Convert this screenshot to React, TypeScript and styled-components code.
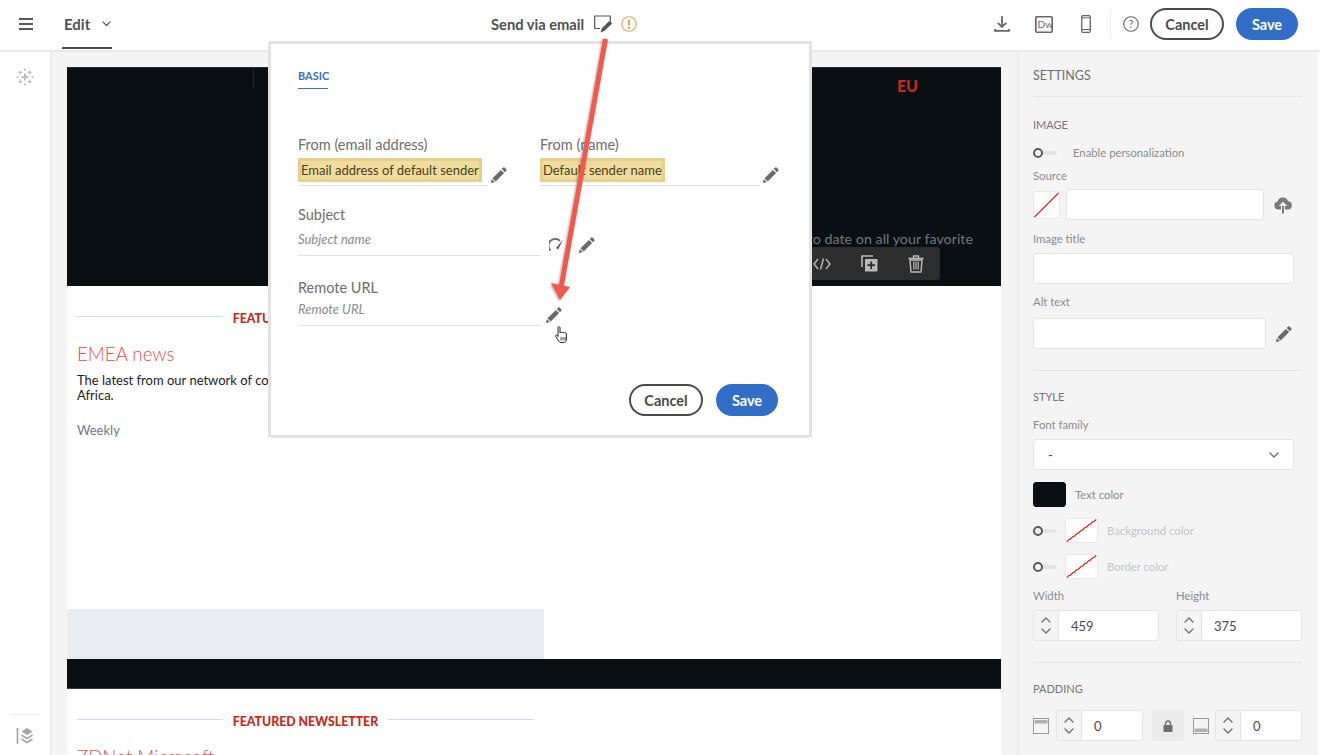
import React from 'react';
import styled, { createGlobalStyle } from 'styled-components';

const GlobalStyle = createGlobalStyle`
  html, body {
    margin: 0;
    padding: 0;
    background: #fff;
    overflow: hidden;
  }
  * {
    box-sizing: border-box;
  }
`;

const ui = `Lato, "Open Sans", sans-serif`;
const mail = `Lato, "Noto Sans", sans-serif`;

const Page = styled.div`
  position: relative;
  width: 1320px;
  height: 755px;
  overflow: hidden;
  font-family: ${ui};
  color: #4b4b4b;
  display: flex;
  flex-direction: column;
`;

const TopBar = styled.header`
  flex: 0 0 52px;
  height: 52px;
  background: #fff;
  border-bottom: 2px solid #e9e9e9;
  display: flex;
  align-items: center;
  padding: 0 22px 2px 19px;
`;

const LeftGroup = styled.div`
  width: 472px;
  height: 100%;
  display: flex;
  align-items: center;
`;

const EditTab = styled.div`
  position: relative;
  margin-left: 29px;
  width: 50px;
  height: 50px;
  display: flex;
  align-items: center;
  gap: 12px;
  padding-left: 2px;
  font-size: 15px;
  font-weight: 700;
  color: #505050;
  white-space: nowrap;

  &::after {
    content: '';
    position: absolute;
    left: 0;
    right: 0;
    bottom: 0;
    height: 2px;
    background: #4b4b4b;
  }
`;

const CenterGroup = styled.div`
  display: flex;
  align-items: center;
  font-size: 14.7px;
  font-weight: 700;
  color: #505050;
`;

const RightGroup = styled.div`
  margin-left: auto;
  display: flex;
  align-items: center;
`;

const Divider = styled.span`
  width: 1px;
  height: 28px;
  background: #ececec;
  margin: 0 12px 0 19px;
`;

const Pill = styled.button<{ $primary?: boolean }>`
  height: 32px;
  padding: 0;
  width: ${(p) => (p.$primary ? 62 : 74)}px;
  border-radius: 17px;
  border: 2px solid ${(p) => (p.$primary ? '#326ec8' : '#4b4b4b')};
  background: ${(p) => (p.$primary ? '#326ec8' : '#fff')};
  color: ${(p) => (p.$primary ? '#fff' : '#4b4b4b')};
  font-family: ${ui};
  font-size: 14.5px;
  font-weight: 700;
`;

const Body = styled.div`
  flex: 1;
  display: flex;
  min-height: 0;
`;

const Rail = styled.aside`
  flex: 0 0 52px;
  background: #fff;
  border-right: 2px solid #ececec;
  display: flex;
  flex-direction: column;
  justify-content: space-between;
  align-items: center;
  padding: 16px 0 10px;
`;

const RailFoot = styled.div`
  width: 30px;
  border-top: 1px solid #ececec;
  padding-top: 12px;
  display: flex;
  justify-content: center;
`;

const Canvas = styled.main`
  flex: 0 0 965px;
  background: #f4f4f4;
  padding: 15px 16px 0 15px;
  overflow: hidden;
`;

const Hero = styled.section`
  position: relative;
  height: 219px;
  background: #0a0f13;
  border-top: 1px solid #262b30;
  display: flex;
  flex-direction: column;
  align-items: flex-end;
  font-family: ${mail};

  &::before {
    content: '';
    position: absolute;
    left: 186px;
    top: 0;
    width: 1px;
    height: 20px;
    background: #1c2730;
  }
`;

const HeroTag = styled.div`
  margin: 8px 83px 0 0;
  color: #c9281c;
  font-size: 16px;
  font-weight: 900;
`;

const HeroText = styled.div`
  margin: 135px 28px 0 0;
  color: #70777e;
  font-size: 14.3px;
  white-space: nowrap;
`;

const HeroTools = styled.div`
  position: absolute;
  right: 61px;
  bottom: 6px;
  width: 260px;
  height: 33px;
  background: #2d2d2d;
  border-radius: 3px;
  display: flex;
  justify-content: flex-end;
  align-items: center;
  gap: 30px;
  padding-right: 16px;
  color: #b9b9b9;
`;

const Story = styled.section`
  height: 373px;
  background: #fff;
  display: flex;
  flex-direction: column;
  font-family: ${mail};
`;

const StoryCol = styled.div`
  width: 477px;
  flex: 1;
  padding: 25px 10px 0;
`;

const Ruled = styled.div`
  display: flex;
  align-items: center;
  gap: 10px;
  color: #c9281c;
  font-size: 12.3px;
  font-weight: 900;
  white-space: nowrap;

  &::before,
  &::after {
    content: '';
    flex: 1;
    height: 1px;
    margin-top: -5px;
    background: #d3dbe6;
  }
`;

const StoryTitle = styled.h3`
  margin: 15px 0 0;
  color: #e0524a;
  font-size: 18.7px;
  line-height: 26px;
  font-weight: 300;
`;

const StoryText = styled.p`
  margin: 6px 0 0;
  color: #1e2226;
  font-size: 13px;
  line-height: 15px;
  white-space: nowrap;
`;

const StoryMeta = styled.div`
  margin-top: 19px;
  color: #6f7a86;
  font-size: 13px;
`;

const GreyBlock = styled.div`
  width: 477px;
  height: 50px;
  background: #e9ecf1;
`;

const BlackBar = styled.div`
  height: 30px;
  background: #0a0f13;
  border-bottom: 1px solid #33383c;
`;

const Settings = styled.aside`
  flex: 1;
  background: #f4f4f4;
  border-left: 2px solid #ececec;
  border-right: 2px solid #fff;
  padding: 14px 16px 0 14px;
  font-size: 11.3px;
  color: #8c8c8c;
  overflow: hidden;
`;

const PanelTitle = styled.div`
  height: 31px;
  line-height: 20px;
  font-size: 12.5px;
  color: #6e6e6e;
  border-bottom: 1px solid #e6e6e6;
`;

const GroupTitle = styled.div<{ $top: number }>`
  margin-top: ${(p) => p.$top}px;
  height: 16px;
  line-height: 16px;
  font-size: 11px;
  color: #747474;
`;

const FieldLabel = styled.div<{ $top: number }>`
  margin-top: ${(p) => p.$top}px;
  height: 16px;
  line-height: 16px;
  color: #8c8c8c;
`;

const Row = styled.div<{ $top: number }>`
  margin-top: ${(p) => p.$top}px;
  display: flex;
  align-items: center;
`;

const Toggle = styled.span`
  position: relative;
  display: inline-block;
  flex: 0 0 24px;
  height: 4px;
  border-radius: 2px;
  background: #e4e4e4;

  &::before {
    content: '';
    box-sizing: border-box;
    position: absolute;
    left: 0;
    top: -3px;
    width: 10px;
    height: 10px;
    border-radius: 50%;
    background: #f4f4f4;
    border: 2px solid #5a5a5a;
  }
`;

const Input = styled.div<{ $w: number; $h?: number; $ml?: number }>`
  width: ${(p) => p.$w}px;
  height: ${(p) => p.$h ?? 31}px;
  margin-left: ${(p) => p.$ml ?? 0}px;
  background: #fff;
  border: 1px solid #e4e4e4;
  border-radius: 3px;
  display: flex;
  align-items: center;
  justify-content: space-between;
  padding: 0 14px 0 14px;
  color: #4b4b4b;
  font-size: 13px;
`;

const Swatch = styled.span<{ $w: number; $h: number; $dark?: boolean; $ml?: number }>`
  flex: 0 0 ${(p) => p.$w}px;
  width: ${(p) => p.$w}px;
  height: ${(p) => p.$h}px;
  margin-left: ${(p) => p.$ml ?? 0}px;
  border-radius: 3px;
  border: 1px solid ${(p) => (p.$dark ? '#0a0f13' : '#e8e8e8')};
  background: ${(p) =>
    p.$dark
      ? '#0a0f13'
      : `linear-gradient(to bottom right, #fff calc(50% - 0.7px), #e8483c calc(50% - 0.7px), #e8483c calc(50% + 0.7px), #fff calc(50% + 0.7px))`};
`;

const SwatchLabel = styled.span<{ $muted?: boolean; $gap: number }>`
  margin-left: ${(p) => p.$gap}px;
  color: ${(p) => (p.$muted ? '#c4c4c4' : '#8c8c8c')};
`;

const Rule = styled.div<{ $top: number }>`
  margin-top: ${(p) => p.$top}px;
  height: 1px;
  background: #e6e6e6;
`;

const Stepper = styled.div<{ $w: number; $ml?: number }>`
  width: ${(p) => p.$w}px;
  margin-left: ${(p) => p.$ml ?? 0}px;
  height: 31px;
  display: flex;
  background: #fff;
  border: 1px solid #e4e4e4;
  border-radius: 3px;
  overflow: hidden;
  color: #4b4b4b;
  font-size: 13px;
`;

const StepArrows = styled.div`
  flex: 0 0 25px;
  background: #f4f4f4;
  border-right: 1px solid #e4e4e4;
  display: flex;
  flex-direction: column;
  align-items: center;
  justify-content: center;
  gap: 5px;
`;

const StepValue = styled.div`
  flex: 1;
  display: flex;
  align-items: center;
  padding-left: 12px;
`;

const SizeRow = styled.div`
  margin-top: 9px;
  display: flex;
  gap: 17px;
`;

const SizeCol = styled.div`
  width: 126px;
`;

const LockBox = styled.div`
  flex: 0 0 32px;
  height: 31px;
  margin: 0 9px;
  background: #ebebeb;
  border-radius: 3px;
  display: flex;
  align-items: center;
  justify-content: center;
`;

const Modal = styled.div`
  position: absolute;
  left: 268px;
  top: 41px;
  width: 544px;
  height: 397px;
  background: #fff;
  border: 3px solid #e2e2e2;
  border-radius: 3px;
  padding: 24px 29px 0 27px;
  font-size: 14.5px;
  color: #6e6e6e;
`;

const ModalTab = styled.div`
  width: 30px;
  height: 21px;
  border-bottom: 1px solid #3d6fc4;
  color: #3d6fc4;
  font-size: 11px;
  font-weight: 700;
  line-height: 16px;
`;

const FormGrid = styled.div`
  display: grid;
  grid-template-columns: 242px 240px;
  margin-top: 47px;
`;

const FormField = styled.div<{ $wide?: boolean }>`
  height: 70px;
  grid-column: ${(p) => (p.$wide ? '1 / -1' : 'auto')};
`;

const FormLabel = styled.div<{ $top?: number }>`
  margin-top: ${(p) => p.$top ?? 0}px;
  height: 18px;
  line-height: 18px;
  font-size: 14.5px;
  color: #6e6e6e;
`;

const FieldLine = styled.div`
  display: flex;
  align-items: flex-end;
`;

const FieldValue = styled.div<{ $w: number; $h?: number }>`
  width: ${(p) => p.$w}px;
  height: ${(p) => p.$h ?? 32}px;
  border-bottom: 1px solid #e2e2e2;
  padding-top: ${(p) => (p.$h ?? 32) - 28}px;
`;

const Highlight = styled.span`
  display: inline-block;
  height: 24px;
  line-height: 18px;
  background: #efdc9f;
  border: 3px solid #e6cf8b;
  color: #4c3f16;
  font-size: 13px;
  white-space: nowrap;
`;

const Placeholder = styled.span`
  display: block;
  padding-top: 3px;
  font-style: italic;
  font-size: 13px;
  color: #8c8c8c;
`;

const IconSlot = styled.div<{ $left: number }>`
  margin-left: ${(p) => p.$left}px;
  margin-bottom: 3px;
  display: flex;
  align-items: center;
  gap: 14px;
`;

const ModalActions = styled.div`
  position: absolute;
  right: 31px;
  bottom: 19px;
  display: flex;
  gap: 13px;
`;

const Overlay = styled.svg`
  position: absolute;
  left: 0;
  top: 0;
  pointer-events: none;
`;

const Icon = styled.svg<{ $ml?: number }>`
  display: block;
  flex: none;
  margin-left: ${(p) => p.$ml ?? 0}px;
`;

const Pencil = ({ size = 16, color = '#6a6a6a', ml = 0 }: { size?: number; color?: string; ml?: number }) => (
  <Icon $ml={ml} width={size} height={size} viewBox="0 0 16 16">
    <path
      fill={color}
      d="M12.2.6a1 1 0 0 1 1.4 0l1.8 1.8a1 1 0 0 1 0 1.4l-1.5 1.5-3.2-3.2zM9.9 2.9l3.2 3.2-8.4 8.4-3.2-3.2zM.9 12.1l3 3-3.6.8a.3.3 0 0 1-.3-.3z"
    />
  </Icon>
);

const Chevron = ({ up, size = 10, color = '#6e6e6e' }: { up?: boolean; size?: number; color?: string }) => (
  <Icon width={size} height={size * 0.6} viewBox="0 0 10 6">
    <path
      d={up ? 'M1 5l4-4 4 4' : 'M1 1l4 4 4-4'}
      fill="none"
      stroke={color}
      strokeWidth="1.3"
      strokeLinecap="round"
      strokeLinejoin="round"
    />
  </Icon>
);

const NumberField = ({ value, w, ml }: { value: string; w: number; ml?: number }) => (
  <Stepper $w={w} $ml={ml}>
    <StepArrows>
      <Chevron up />
      <Chevron />
    </StepArrows>
    <StepValue>{value}</StepValue>
  </Stepper>
);

const Plus = ({ x, y, r, w = 1.2 }: { x: number; y: number; r: number; w?: number }) => (
  <path d={`M${x - r} ${y}h${r * 2}M${x} ${y - r}v${r * 2}`} stroke="#bdbdbd" strokeWidth={w} fill="none" />
);

const AnchorIcon = () => (
  <Icon width="18" height="18" viewBox="0 0 18 18">
    <Plus x={9} y={9} r={3.4} w={2} />
    <Plus x={4.4} y={4.4} r={2} />
    <Plus x={13.6} y={4.4} r={2} />
    <Plus x={4.4} y={13.6} r={2} />
    <Plus x={13.6} y={13.6} r={2} />
    <Plus x={9} y={1.6} r={1.2} w={1} />
    <Plus x={9} y={16.4} r={1.2} w={1} />
    <Plus x={1.6} y={9} r={1.2} w={1} />
    <Plus x={16.4} y={9} r={1.2} w={1} />
  </Icon>
);

const LayersIcon = () => (
  <Icon width="18" height="18" viewBox="0 0 18 18">
    <path d="M1.5 1v16" stroke="#a4a4a4" strokeWidth="1.6" />
    <path d="M0 3l1.5-2L3 3z" fill="#a4a4a4" />
    <path d="M11 1l5.5 3.5L11 8 5.5 4.5z" fill="#a4a4a4" />
    <path d="M5.5 8L11 11.5 16.5 8M5.5 12L11 15.5 16.5 12" fill="none" stroke="#a4a4a4" strokeWidth="1.5" />
  </Icon>
);

const PaddingIcon = ({ bottom }: { bottom?: boolean }) => (
  <Icon width="16" height="16" viewBox="0 0 16 16">
    <rect x="0.5" y="0.5" width="15" height="15" fill="#f4f4f4" stroke="#9a9a9a" />
    <rect x="1.5" y={bottom ? 10.5 : 2} width="13" height="3.5" fill="#b0b0b0" />
  </Icon>
);

const App: React.FC = () => {
  return (
    <Page>
      <GlobalStyle />
      <TopBar>
        <LeftGroup>
          <Icon width="14" height="12" viewBox="0 0 14 12">
            <path d="M0 1h14M0 6h14M0 11h14" stroke="#5a5a5a" strokeWidth="2" />
          </Icon>
          <EditTab>
            Edit
            <Chevron size={9} color="#555" />
          </EditTab>
        </LeftGroup>
        <CenterGroup>
          Send via email
          <Icon $ml={10} width="19" height="18" viewBox="0 0 19 18">
            <path d="M6 13.5H.7V1h15.6v6" fill="none" stroke="#555" strokeWidth="1.2" />
            <path fill="#555" d="M15.2 6l3 2.6-7.6 7.2-4 1.7 1.1-4z" />
          </Icon>
          <Icon $ml={8} width="16" height="16" viewBox="0 0 16 16">
            <circle cx="8" cy="8" r="7.2" fill="none" stroke="#e8a25e" strokeWidth="1.1" />
            <path d="M8 3.6v5.8" stroke="#e0852f" strokeWidth="1.5" />
            <circle cx="8" cy="11.7" r="1" fill="#e0852f" />
          </Icon>
        </CenterGroup>
        <RightGroup>
          <Icon width="16" height="16" viewBox="0 0 16 16">
            <path d="M8 0v11" stroke="#666" strokeWidth="1.8" />
            <path d="M3.8 6.8L8 11l4.2-4.2" fill="none" stroke="#666" strokeWidth="1.8" />
            <path d="M1 13v1.8h14V13" fill="none" stroke="#666" strokeWidth="1.8" />
          </Icon>
          <Icon $ml={25} width="18" height="17" viewBox="0 0 18 17">
            <rect x="0.8" y="0.8" width="16.4" height="15.4" rx="1" fill="#fff" stroke="#666" strokeWidth="1.6" />
            <text x="2.6" y="12" fontSize="10" fill="#666" fontFamily="Lato, sans-serif">
              Dw
            </text>
          </Icon>
          <Icon $ml={28} width="10" height="18" viewBox="0 0 10 18">
            <rect x="0.7" y="0.7" width="8.6" height="16.6" rx="1.4" fill="none" stroke="#666" strokeWidth="1.3" />
            <path d="M1 2.8h8M1 14.5h8" stroke="#666" strokeWidth="1" />
          </Icon>
          <Divider />
          <Icon width="16" height="16" viewBox="0 0 16 16">
            <circle cx="8" cy="8" r="7.3" fill="none" stroke="#666" strokeWidth="1.1" />
            <text x="8" y="12" textAnchor="middle" fontSize="11" fill="#666" fontFamily="Lato, sans-serif">
              ?
            </text>
          </Icon>
          <Pill style={{ marginLeft: 11 }}>Cancel</Pill>
          <Pill $primary style={{ marginLeft: 12 }}>
            Save
          </Pill>
        </RightGroup>
      </TopBar>

      <Body>
        <Rail>
          <AnchorIcon />
          <RailFoot>
            <LayersIcon />
          </RailFoot>
        </Rail>

        <Canvas>
          <Hero>
            <HeroTag>EU</HeroTag>
            <HeroText>Stay up to date on all your favorite</HeroText>
            <HeroTools>
              <Icon width="18" height="12" viewBox="0 0 18 12">
                <path d="M5 1L1 6l4 5M13 1l4 5-4 5M10.5 .5l-3 11" fill="none" stroke="#b9b9b9" strokeWidth="1.4" />
              </Icon>
              <Icon width="17" height="17" viewBox="0 0 17 17">
                <path d="M1 12V1h11" fill="none" stroke="#b9b9b9" strokeWidth="1.6" />
                <rect x="4" y="4" width="12.5" height="12.5" fill="#b9b9b9" />
                <path d="M10.2 6.5v7.5M6.5 10.2H14" stroke="#2d2d2d" strokeWidth="1.8" />
              </Icon>
              <Icon width="16" height="18" viewBox="0 0 16 18" fill="none" stroke="#b9b9b9">
                <path d="M0.5 3.5h15" strokeWidth="1.6" />
                <path d="M5.5 3V1h5v2" strokeWidth="1.4" />
                <path d="M2 5l1 12h10l1-12z" strokeWidth="1.4" />
                <path d="M5.8 6.5v8M8 6.5v8M10.2 6.5v8" strokeWidth="1.2" />
              </Icon>
            </HeroTools>
          </Hero>

          <Story>
            <StoryCol>
              <Ruled>FEATURED NEWSLETTER</Ruled>
              <StoryTitle>EMEA news</StoryTitle>
              <StoryText>
                The latest from our network of correspondents across Europe, the Middle East and
                <br />
                Africa.
              </StoryText>
              <StoryMeta>Weekly</StoryMeta>
            </StoryCol>
            <GreyBlock />
          </Story>
          <BlackBar />
          <Story>
            <StoryCol>
              <Ruled>FEATURED NEWSLETTER</Ruled>
              <StoryTitle>ZDNet Microsoft</StoryTitle>
            </StoryCol>
          </Story>
        </Canvas>

        <Settings>
          <PanelTitle>SETTINGS</PanelTitle>

          <GroupTitle $top={20}>IMAGE</GroupTitle>
          <Row $top={13}>
            <Toggle />
            <SwatchLabel $gap={16}>Enable personalization</SwatchLabel>
          </Row>
          <FieldLabel $top={9}>Source</FieldLabel>
          <Row $top={5}>
            <Swatch $w={27} $h={28} />
            <Input $w={198} $ml={6} />
            <Icon $ml={9} width="20" height="18" viewBox="0 0 20 18">
              <path
                fill="#7a7a7a"
                d="M5 13.5A4 4 0 0 1 4.6 5.6 5.5 5.5 0 0 1 15 5a4.3 4.3 0 0 1 .4 8.5H12V10h2.2L10 5.8 5.8 10H8v3.5z"
              />
              <rect x="9" y="10" width="2" height="7.5" fill="#7a7a7a" />
            </Icon>
          </Row>
          <FieldLabel $top={11}>Image title</FieldLabel>
          <Row $top={6}>
            <Input $w={261} />
          </Row>
          <FieldLabel $top={10}>Alt text</FieldLabel>
          <Row $top={8}>
            <Input $w={233} />
            <Pencil ml={10} />
          </Row>
          <Rule $top={21} />

          <GroupTitle $top={18}>STYLE</GroupTitle>
          <FieldLabel $top={12}>Font family</FieldLabel>
          <Row $top={6}>
            <Input $w={261}>
              -
              <Chevron />
            </Input>
          </Row>
          <Row $top={12}>
            <Swatch $w={33} $h={25} $dark />
            <SwatchLabel $gap={9}>Text color</SwatchLabel>
          </Row>
          <Row $top={11}>
            <Toggle />
            <Swatch $w={33} $h={25} $ml={8} />
            <SwatchLabel $muted $gap={9}>
              Background color
            </SwatchLabel>
          </Row>
          <Row $top={11}>
            <Toggle />
            <Swatch $w={33} $h={25} $ml={8} />
            <SwatchLabel $muted $gap={9}>
              Border color
            </SwatchLabel>
          </Row>
          <SizeRow>
            <SizeCol>
              <FieldLabel $top={0}>Width</FieldLabel>
              <Row $top={6}>
                <NumberField value="459" w={126} />
              </Row>
            </SizeCol>
            <SizeCol>
              <FieldLabel $top={0}>Height</FieldLabel>
              <Row $top={6}>
                <NumberField value="375" w={126} />
              </Row>
            </SizeCol>
          </SizeRow>
          <Rule $top={21} />

          <GroupTitle $top={18}>PADDING</GroupTitle>
          <Row $top={13}>
            <PaddingIcon />
            <NumberField value="0" w={87} ml={7} />
            <LockBox>
              <Icon width="10" height="12" viewBox="0 0 10 12">
                <path d="M2.5 6V3.5a2.5 2.5 0 0 1 5 0V6" fill="none" stroke="#6e6e6e" strokeWidth="1.4" />
                <rect x="0.5" y="5" width="9" height="7" rx="1" fill="#6e6e6e" />
              </Icon>
            </LockBox>
            <PaddingIcon bottom />
            <NumberField value="0" w={87} ml={6} />
          </Row>
        </Settings>
      </Body>

      <Modal>
        <ModalTab>BASIC</ModalTab>
        <FormGrid>
          <FormField>
            <FormLabel>From (email address)</FormLabel>
            <FieldLine>
              <FieldValue $w={190}>
                <Highlight>Email address of default sender</Highlight>
              </FieldValue>
              <IconSlot $left={3}>
                <Pencil />
              </IconSlot>
            </FieldLine>
          </FormField>
          <FormField>
            <FormLabel>From (name)</FormLabel>
            <FieldLine>
              <FieldValue $w={220}>
                <Highlight>Default sender name</Highlight>
              </FieldValue>
              <IconSlot $left={3}>
                <Pencil />
              </IconSlot>
            </FieldLine>
          </FormField>
          <FormField $wide>
            <FormLabel>Subject</FormLabel>
            <FieldLine>
              <FieldValue $w={243}>
                <Placeholder>Subject name</Placeholder>
              </FieldValue>
              <IconSlot $left={8}>
                <Icon width="16" height="14" viewBox="0 0 16 14">
                  <path d="M1.5 12.5A6.5 6.5 0 0 1 11 2.800" fill="none" stroke="#6a6a6a" strokeWidth="1.8" />
                  <path d="M14 1.500L9.300 11.500l-2.400-1.500z" fill="#6a6a6a" />
                </Icon>
                <Pencil />
              </IconSlot>
            </FieldLine>
          </FormField>
          <FormField $wide>
            <FormLabel $top={3}>Remote URL</FormLabel>
            <FieldLine>
              <FieldValue $w={243} $h={29}>
                <Placeholder>Remote URL</Placeholder>
              </FieldValue>
              <IconSlot $left={5}>
                <Pencil />
              </IconSlot>
            </FieldLine>
          </FormField>
        </FormGrid>
        <ModalActions>
          <Pill>Cancel</Pill>
          <Pill $primary>Save</Pill>
        </ModalActions>
      </Modal>

      <Overlay width="1320" height="755" viewBox="0 0 1320 755">
        <defs>
          <filter id="arrowShadow" x="-50%" y="-10%" width="200%" height="120%">
            <feDropShadow dx="-1" dy="1" stdDeviation="1" floodColor="#000" floodOpacity="0.35" />
          </filter>
        </defs>
        <g filter="url(#arrowShadow)">
          <path d="M605.500 39L561 288" stroke="#f5584c" strokeWidth="5" fill="none" />
          <path d="M551 283l19 4-10 13z" fill="#f5584c" />
        </g>
        <g transform="translate(555 326)">
          <path
            d="M3 1.500c0-1 2-1 2 0V7c0-1 2-1.200 2.200 0 .2-1 2-1 2.200.2.3-.9 2-.7 2 .6V13c0 2-1 3.500-2.600 3.500H6C4.500 16.500 4 15.500 3 14L.7 10.500c-.6-1 .7-2 1.500-1L3 10.500z"
            fill="#fff"
            stroke="#222"
            strokeWidth="1"
          />
          <path d="M6 11v3.500M8 11v3.500M10 11v3.500" stroke="#222" strokeWidth="0.8" />
        </g>
      </Overlay>
    </Page>
  );
};

export default App;
